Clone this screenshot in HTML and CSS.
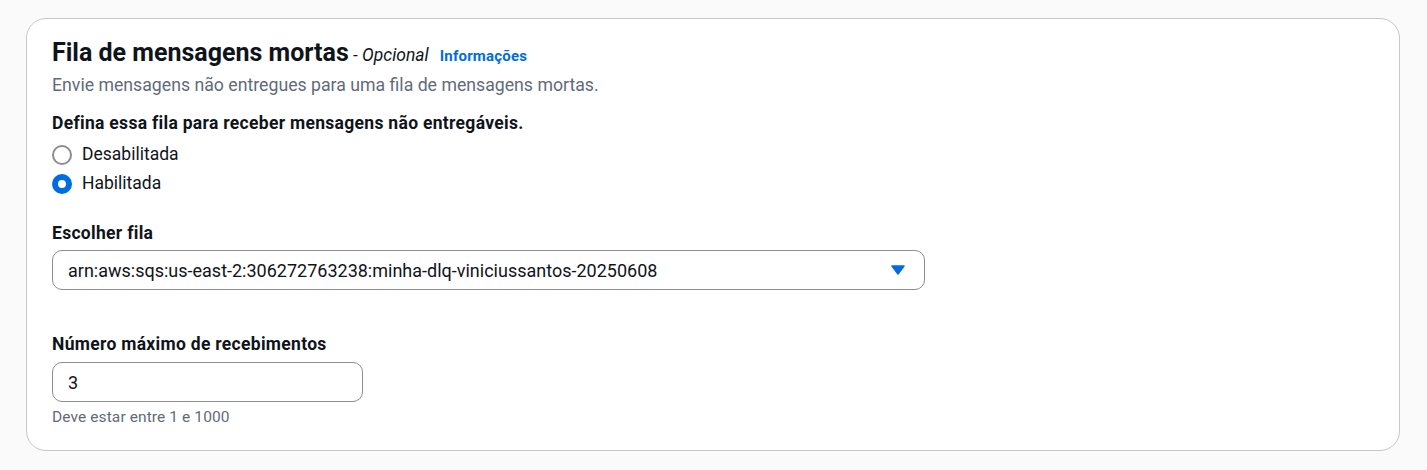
FILE: index.html
```html
<!DOCTYPE html>
<html lang="pt-BR">
<head>
<meta charset="utf-8">
<link rel="stylesheet" href="styles.css">
</head>
<body>
<div class="page">
  <section class="card">
    <header class="card-header">
      <h2 class="title">Fila de mensagens mortas<span class="optional"> - Opcional</span><a class="info" href="#">Informações</a></h2>
      <p class="desc">Envie mensagens não entregues para uma fila de mensagens mortas.</p>
    </header>
    <div class="field">
      <div class="label">Defina essa fila para receber mensagens não entregáveis.</div>
      <div class="radios">
        <label class="radio"><span class="dot"></span><span>Desabilitada</span></label>
        <label class="radio"><span class="dot checked"></span><span>Habilitada</span></label>
      </div>
    </div>
    <div class="field field-queue">
      <div class="label">Escolher fila</div>
      <div class="select">
        <span class="select-value">arn:aws:sqs:us-east-2:306272763238:minha-dlq-viniciussantos-20250608</span>
        <svg class="caret" width="14" height="10" viewBox="0 0 14 10"><path d="M1 1 L13 1 L7 9 Z" fill="#006ce0" stroke="#006ce0" stroke-width="1.5" stroke-linejoin="round"/></svg>
      </div>
    </div>
    <div class="field field-max">
      <div class="label">Número máximo de recebimentos</div>
      <div class="input">3</div>
      <div class="hint">Deve estar entre 1 e 1000</div>
    </div>
  </section>
</div>
</body>
</html>
```

FILE: styles.css
```css
* { box-sizing: border-box; }
html, body { margin: 0; padding: 0; }
body {
  background: #fafafa;
  font-family: Roboto, "Liberation Sans", Arial, sans-serif;
  color: #0f141a;
}
.page {
  padding: 18px 27px 19px 26px;
}
.card {
  background: #ffffff;
  border: 1px solid #c6c6cd;
  border-radius: 20px;
  padding: 19px 25px 23px 25px;
  display: flex;
  flex-direction: column;
}
.card-header { display: flex; flex-direction: column; }
.title {
  margin: 0;
  font-size: 25px;
  line-height: 30px;
  font-weight: 700;
}
.optional {
  font-size: 17.5px;
  font-weight: 400;
  font-style: italic;
}
.info {
  margin-left: 11px;
  font-size: 15px;
  font-weight: 700;
  color: #006ce0;
  text-decoration: none;
  letter-spacing: 0.2px;
}
.desc {
  margin: 2px 0 0 0;
  font-size: 17.7px;
  line-height: 25px;
  color: #5f6b7a;
}
.field { display: flex; flex-direction: column; margin-top: 13px; }
.label {
  font-size: 17.5px;
  line-height: 25px;
  font-weight: 700;
  letter-spacing: 0.3px;
}
.radios { display: flex; flex-direction: column; gap: 4px; margin-top: 6px; }
.radio {
  display: flex;
  align-items: center;
  gap: 10px;
  font-size: 17.5px;
  line-height: 25px;
}
.dot {
  width: 20px;
  height: 20px;
  border-radius: 50%;
  border: 2px solid #8c8c94;
  background: #fff;
  flex: none;
}
.dot.checked {
  border: 6px solid #006ce0;
}
.field-queue { margin-top: 25px; }
.select {
  margin-top: 4px;
  width: 873px;
  height: 40px;
  border: 1px solid #8c8c94;
  border-radius: 10px;
  display: flex;
  align-items: center;
  justify-content: space-between;
  padding: 0 19px 0 15px;
  font-size: 18px;
}
.caret { display: block; }
.field-max { margin-top: 42px; }
.input {
  margin-top: 5px;
  width: 311px;
  height: 40px;
  border: 1px solid #8c8c94;
  border-radius: 10px;
  display: flex;
  align-items: center;
  padding: 0 15px;
  font-size: 18px;
}
.hint {
  margin-top: 5px;
  font-size: 15.5px;
  line-height: 20px;
  letter-spacing: 0.1px;
  color: #5f6b7a;
}
```
